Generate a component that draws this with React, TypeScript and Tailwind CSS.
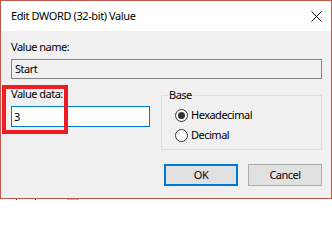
import React from "react";

const font = { fontFamily: '"Noto Sans", "Open Sans", sans-serif' };

export default function App() {
  return (
    <div
      className="relative w-[332px] h-[200px] overflow-hidden bg-white text-[11px] leading-[16px] tracking-[-0.5px] text-black"
      style={font}
    >
      <div className="w-[332px] h-[199px] border border-[#c0574a] flex flex-col">
        {/* Title bar */}
        <div className="h-[30px] shrink-0 bg-white flex items-center justify-between pl-[10px] pr-[9px]">
          <span className="text-[11px] tracking-[-0.4px]">Edit DWORD (32-bit) Value</span>
          <svg width="11" height="11" viewBox="0 0 11 11">
            <path d="M0.5 0.5 L10.5 10.5 M10.5 0.5 L0.5 10.5" stroke="#000" strokeWidth="1" />
          </svg>
        </div>
        {/* Body */}
        <div className="flex-1 bg-[#f0f0f0] pl-[10px] pr-[9px] flex flex-col">
          <div className="mt-[8px] h-[16px]">Value name:</div>
          <div className="mt-[4px] h-[20px] border border-[#838383] bg-[#f0f0f0] flex items-center pl-[3px]">
            Start
          </div>
          <div className="mt-[7px] flex gap-[11px] h-[64px]">
            <div className="w-[139px] flex flex-col">
              <div className="h-[16px]">Value data:</div>
              <div className="mt-[4px] h-[21px] border border-[#0078d7] bg-white flex items-center pl-[2px]">
                3
              </div>
            </div>
            <div className="relative mt-[9px] w-[161px] h-[55px] border border-[#dcdcdc] pt-[9px] pl-[13px]">
              <span className="absolute left-[6px] top-[-9px] px-[1px] bg-[#f0f0f0] leading-[16px]">
                Base
              </span>
              <div className="h-[20px] flex items-center">
                <span className="w-[13px] h-[13px] rounded-full border border-[#333] bg-white flex items-center justify-center">
                  <span className="w-[7px] h-[7px] rounded-full bg-[#333]" />
                </span>
                <span className="ml-[3px]">Hexadecimal</span>
              </div>
              <div className="h-[20px] flex items-center">
                <span className="w-[13px] h-[13px] rounded-full border border-[#333] bg-white" />
                <span className="ml-[3px]">Decimal</span>
              </div>
            </div>
          </div>
          <div className="mt-[14px] flex justify-end gap-[10px]">
            <div className="w-[74px] h-[22px] border-2 border-[#0078d7] bg-[#e1e1e1] flex items-center justify-center">
              OK
            </div>
            <div className="w-[74px] h-[22px] border border-[#adadad] bg-[#e1e1e1] flex items-center justify-center">
              Cancel
            </div>
          </div>
        </div>
      </div>
      {/* strip of background below window */}
      <div className="h-[1px] flex">
        <div className="ml-[16px] w-[1px] bg-[#444]" />
        <div className="ml-[18px] w-[1px] bg-[#444]" />
        <div className="ml-[31px] w-[12px] bg-[#e8b060]" />
      </div>
      {/* red highlight */}
      <div className="absolute left-[2px] top-[85px] w-[66px] h-[49px] border-4 border-[#ee1c25]" />
    </div>
  );
}
